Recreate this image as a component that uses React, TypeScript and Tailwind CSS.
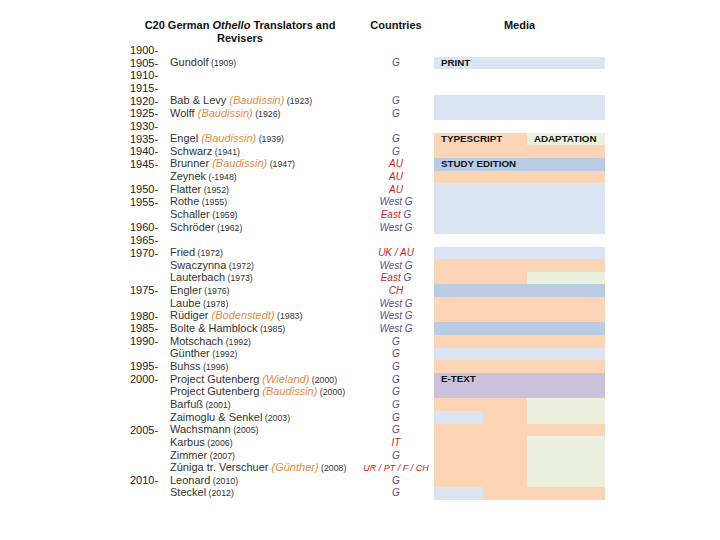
import React from 'react';

type Seg = { w: number; c: string; t?: string };
type Row = {
  y?: string;
  n?: string;
  o?: string;
  d?: string;
  c?: React.ReactNode;
  m?: Seg[];
};

const BG: Record<string, string> = {
  w: 'bg-white',
  l: 'bg-[#dbe5f1]',
  p: 'bg-[#fbd5b5]',
  b: 'bg-[#b8cce4]',
  g: 'bg-[#ebf1de]',
  u: 'bg-[#ccc1da]',
};

// sub-columns of the media band: A 49px, B 44px, C 78px
const full = (c: string, t?: string): Seg[] => [{ w: 171, c, t }];
const ab_c = (t1?: string, t2?: string): Seg[] => [
  { w: 93, c: 'p', t: t1 },
  { w: 78, c: 'g', t: t2 },
];

const G = <span className="text-[#5d4c86]">G</span>;
const WG = <span className="text-[#5d4c86]">West G</span>;
const EG = (
  <>
    <span className="text-[#c8232c]">East</span> <span className="text-[#5d4c86]">G</span>
  </>
);
const red = (s: string) => <span className="text-[#c8232c]">{s}</span>;

const rows: Row[] = [
  { y: '1900-' },
  { y: '1905-', n: 'Gundolf', d: '(1909)', c: G, m: full('l', 'PRINT') },
  { y: '1910-' },
  { y: '1915-' },
  { y: '1920-', n: 'Bab & Levy', o: '(Baudissin)', d: '(1923)', c: G, m: full('l') },
  { y: '1925-', n: 'Wolff', o: '(Baudissin)', d: '(1926)', c: G, m: full('l') },
  { y: '1930-' },
  { y: '1935-', n: 'Engel', o: '(Baudissin)', d: '(1939)', c: G, m: ab_c('TYPESCRIPT', 'ADAPTATION') },
  { y: '1940-', n: 'Schwarz', d: '(1941)', c: G, m: full('p') },
  { y: '1945-', n: 'Brunner', o: '(Baudissin)', d: '(1947)', c: red('AU'), m: full('b', 'STUDY EDITION') },
  { n: 'Zeynek', d: '(-1948)', c: red('AU'), m: full('p') },
  { y: '1950-', n: 'Flatter', d: '(1952)', c: red('AU'), m: full('l') },
  { y: '1955-', n: 'Rothe', d: '(1955)', c: WG, m: full('l') },
  { n: 'Schaller', d: '(1959)', c: EG, m: full('l') },
  { y: '1960-', n: 'Schröder', d: '(1962)', c: WG, m: full('l') },
  { y: '1965-' },
  { y: '1970-', n: 'Fried', d: '(1972)', c: red('UK / AU'), m: full('l') },
  { n: 'Swaczynna', d: '(1972)', c: WG, m: full('p') },
  { n: 'Lauterbach', d: '(1973)', c: EG, m: ab_c() },
  { y: '1975-', n: 'Engler', d: '(1976)', c: red('CH'), m: full('b') },
  { n: 'Laube', d: '(1978)', c: WG, m: full('p') },
  { y: '1980-', n: 'Rüdiger', o: '(Bodenstedt)', d: '(1983)', c: WG, m: full('p') },
  { y: '1985-', n: 'Bolte & Hamblock', d: '(1985)', c: WG, m: full('b') },
  { y: '1990-', n: 'Motschach', d: '(1992)', c: G, m: full('p') },
  { n: 'Günther', d: '(1992)', c: G, m: full('l') },
  { y: '1995-', n: 'Buhss', d: '(1996)', c: G, m: full('p') },
  { y: '2000-', n: 'Project Gutenberg', o: '(Wieland)', d: '(2000)', c: G, m: full('u', 'E-TEXT') },
  { n: 'Project Gutenberg', o: '(Baudissin)', d: '(2000)', c: G, m: full('u') },
  { n: 'Barfuß', d: '(2001)', c: G, m: ab_c() },
  {
    n: 'Zaimoglu & Senkel',
    d: '(2003)',
    c: G,
    m: [
      { w: 49, c: 'l' },
      { w: 44, c: 'p' },
      { w: 78, c: 'g' },
    ],
  },
  { y: '2005-', n: 'Wachsmann', d: '(2005)', c: G, m: full('p') },
  { n: 'Karbus', d: '(2006)', c: red('IT'), m: ab_c() },
  { n: 'Zimmer', d: '(2007)', c: G, m: ab_c() },
  {
    n: 'Zúniga tr. Verschuer',
    o: '(Günther)',
    d: '(2008)',
    c: <span className="text-[9px] text-[#c8232c]">UR / PT / F / CH</span>,
    m: ab_c(),
  },
  { y: '2010-', n: 'Leonard', d: '(2010)', c: G, m: ab_c() },
  {
    n: 'Steckel',
    d: '(2012)',
    c: G,
    m: [
      { w: 49, c: 'l' },
      { w: 122, c: 'p' },
    ],
  },
];

const TableRow = ({ r }: { r: Row }) => (
  <div className="flex h-[12.67px] items-center leading-[12.67px]">
    <div className="w-[40px] text-[11px] text-[#222]">{r.y}</div>
    <div className="w-[188px] whitespace-nowrap text-[11px] text-[#333]">
      {r.n}
      {r.o && <span className="italic text-[#e38b41]"> {r.o}</span>}
      {r.d && <span className="text-[8.75px]"> {r.d}</span>}
    </div>
    <div className="w-[76px] whitespace-nowrap pt-[1px] text-center text-[10px] italic">{r.c}</div>
    <div className="flex h-full w-[171px]">
      {(r.m || full('w')).map((s, i) => (
        <div
          key={i}
          className={`${BG[s.c]} h-full whitespace-nowrap pl-[7px] text-[9.75px] font-bold text-[#111]`}
          style={{ width: s.w }}
        >
          {s.t}
        </div>
      ))}
    </div>
  </div>
);

export default function App() {
  return (
    <div className="h-[540px] w-[720px] bg-white pl-[130px] font-['Liberation_Sans',Arial,sans-serif]">
      <div className="flex h-[44px] pt-[19px] text-[11px] font-bold leading-[13px] text-[#111]">
        <div className="w-[220px] text-center">
          C20 German <span className="italic">Othello</span> Translators and
          <br />
          Revisers
        </div>
        <div className="w-[8px]" />
        <div className="w-[76px] text-center">Countries</div>
        <div className="w-[171px] text-center">Media</div>
      </div>
      <div className="flex flex-col">
        {rows.map((r, i) => (
          <TableRow key={i} r={r} />
        ))}
      </div>
    </div>
  );
}
